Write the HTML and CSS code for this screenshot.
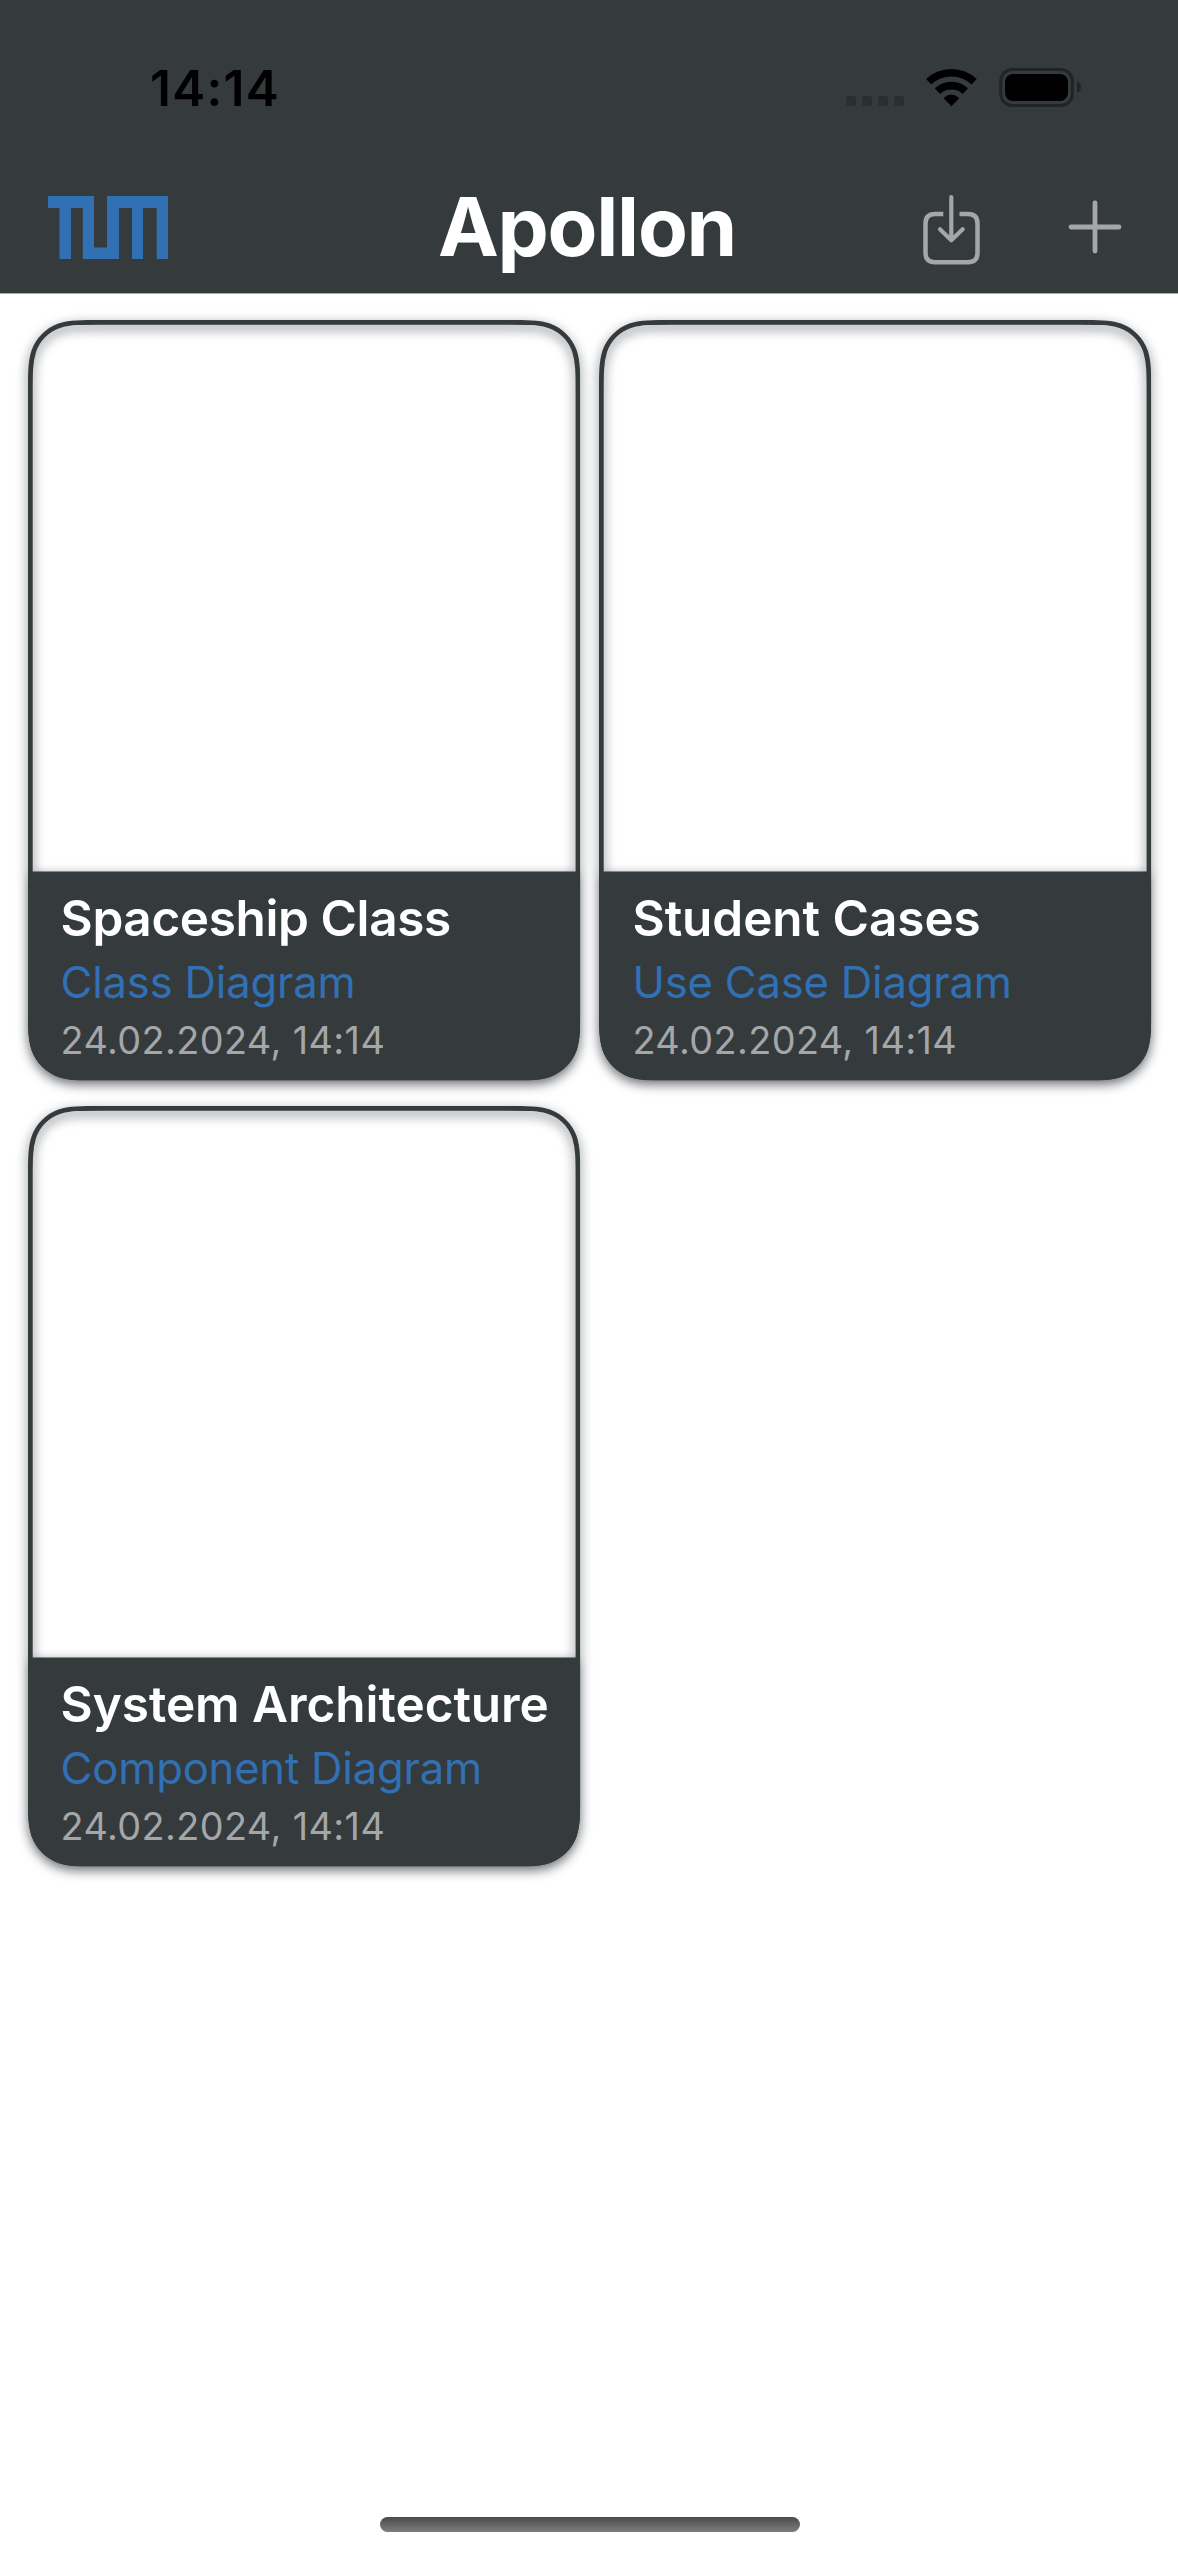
FILE: index.html
```html
<!DOCTYPE html>
<html lang="en">
<head>
<meta charset="utf-8">
<title>Apollon</title>
<link rel="stylesheet" href="styles.css">
</head>
<body>
<svg class="defs" width="0" height="0" aria-hidden="true">
  <defs>
    <path id="card-outline" d="M73.4 0H478.9C500.1 0 510.6 0 520.1 3.1L522 3.6C534.4 8.1 544.2 17.9 548.7 30.3C552.3 41.7 552.3 52.2 552.3 73.4V687.1C552.3 708.3 552.3 718.8 548.7 730.2C544.2 742.6 534.4 752.4 522 756.9L520.1 757.4C510.6 760.5 500.1 760.5 478.9 760.5H73.4C52.2 760.5 41.7 760.5 32.2 757.4L30.3 756.9C17.9 752.4 8.1 742.6 3.6 730.2C0 718.8 0 708.3 0 687.1V73.4C0 52.2 0 41.7 3.6 30.3C8.1 17.9 17.9 8.1 30.3 3.6L32.2 3.1C41.7 0 52.2 0 73.4 0Z"/>
    <clipPath id="card-clip"><use href="#card-outline"/></clipPath>
    <symbol id="card-shape" viewBox="0 0 552.3 760.5">
      <g clip-path="url(#card-clip)" fill="#353a3d">
        <use href="#card-outline" fill="none" stroke="#353a3d" stroke-width="9.4"/>
        <rect y="551.5" width="552.3" height="209"/>
      </g>
    </symbol>
  </defs>
</svg>

<div class="screen">
  <header class="header">
    <div class="status">
      <span class="time">14:14</span>
      <svg class="status-icons" width="236" height="40" viewBox="846 68 236 40">
        <g fill="#2a2d32">
          <rect x="846" y="96" width="10" height="10" rx="3.6"/>
          <rect x="862" y="96" width="10" height="10" rx="3.6"/>
          <rect x="878" y="96" width="10" height="10" rx="3.6"/>
          <rect x="894" y="96" width="10" height="10" rx="3.6"/>
        </g>
        <g fill="none" stroke="#000">
          <path stroke-width="7.6" d="M928.7 81.7A33.2 33.2 0 0 1 974.1 81.7"/>
          <path stroke-width="7.8" d="M937.4 91.1A20.4 20.4 0 0 1 965.4 91.1"/>
        </g>
        <path d="M951.4 106.2L943.9 98.6Q943.6 98 944.2 97.4Q951.4 91.4 958.6 97.4Q959.2 98 958.9 98.6Z"/>
        <rect x="1000.8" y="69.5" width="71.6" height="36" rx="11.5" fill="none" stroke="#212427" stroke-width="3"/>
        <rect x="1005" y="74" width="63" height="27" rx="8"/>
        <path fill="#212427" d="M1077 81Q1081 83.5 1081 87T1077 93Z"/>
      </svg>
    </div>
    <nav class="nav">
      <svg class="logo" width="120" height="63" viewBox="0 0 120 63">
        <path fill="#3070b3" d="M0 0H46V51.5H59V0H120V63H108.7V12H95V63H84V12H71V63H34.8V12H23V63H11.5V12H0Z"/>
      </svg>
      <h1 class="title">Apollon</h1>
      <div class="actions">
        <svg width="58" height="70" viewBox="0 0 58 70" fill="none" stroke="#a5a6a8" stroke-width="4.5">
          <path d="M20.3 19H12Q2.5 19 2.5 28.5V57.8Q2.5 67.2 12 67.2H45Q54.5 67.2 54.5 57.8V28.5Q54.5 19 45 19H36.5"/>
          <path stroke-linecap="round" stroke-linejoin="round" stroke-width="4.2" d="M28.3 2.2V45M17 34.3L28.3 45.3L39.7 34.3"/>
        </svg>
        <svg class="plus" width="54" height="54" viewBox="0 0 54 54" fill="none" stroke="#a5a6a8" stroke-width="4.8" stroke-linecap="round">
          <path d="M27 3V51M3 27H51"/>
        </svg>
      </div>
    </nav>
  </header>

  <main class="grid">
    <article class="card">
      <svg class="shape"><use href="#card-shape"/></svg>
      <div class="info">
        <h2 class="name snug">Spaceship Class</h2>
        <p class="kind">Class Diagram</p>
        <p class="date">24.02.2024, 14:14</p>
      </div>
    </article>
    <article class="card">
      <svg class="shape"><use href="#card-shape"/></svg>
      <div class="info">
        <h2 class="name">Student Cases</h2>
        <p class="kind">Use Case Diagram</p>
        <p class="date">24.02.2024, 14:14</p>
      </div>
    </article>
    <article class="card">
      <svg class="shape"><use href="#card-shape"/></svg>
      <div class="info">
        <h2 class="name">System Architecture</h2>
        <p class="kind">Component Diagram</p>
        <p class="date">24.02.2024, 14:14</p>
      </div>
    </article>
  </main>
  <div class="home-bar"></div>
</div>
</body>
</html>
```
FILE: styles.css
```css
* { box-sizing: border-box; margin: 0; padding: 0; }
body {
  background: #fff;
  font-family: Inter, "Liberation Sans", sans-serif;
}
svg { display: block; flex: none; }
.defs { position: absolute; }
.screen {
  width: 1178px;
  height: 2556px;
  display: flex;
  flex-direction: column;
  align-items: center;
  overflow: hidden;
}
.header {
  width: 100%;
  height: 294px;
  background: #353a3d;
  border-bottom: 1px solid #a9abad;
}
.status {
  height: 138px;
  display: flex;
  justify-content: space-between;
  align-items: flex-start;
  padding: 57px 96px 0 150px;
}
.time {
  font-size: 49.5px;
  font-weight: 600;
  line-height: 62px;
  letter-spacing: 1.3px;
  color: #000;
}
.status-icons { margin-top: 11px; }
.nav {
  display: grid;
  grid-template-columns: 1fr auto 1fr;
  align-items: start;
  padding: 39px 52px 0 48px;
}
.logo { margin-top: 19px; }
.title {
  font-size: 81.5px;
  font-weight: 700;
  line-height: 100px;
  letter-spacing: -1.3px;
  color: #fff;
}
.actions {
  display: flex;
  justify-content: flex-end;
  gap: 87px;
  padding: 18px 4px 0 0;
}
.plus { margin-top: 5px; }
.grid {
  width: 100%;
  display: grid;
  grid-template-columns: 552.3px 552.3px;
  grid-auto-rows: 760.5px;
  gap: 25.5px 19.6px;
  padding: 26.4px 0 0 27.6px;
}
.card { display: grid; }
.shape, .info { grid-area: 1 / 1; }
.shape {
  width: 552.3px;
  height: 760.5px;
  overflow: visible;
  filter: drop-shadow(0 4px 6px rgba(54, 58, 64, 0.75));
}
.info {
  position: relative;
  padding: 566.5px 0 0 33px;
  white-space: nowrap;
}
.name {
  font-size: 49.5px;
  font-weight: 600;
  line-height: 62px;
  letter-spacing: -0.05px;
  color: #fff;
}
.name.snug { letter-spacing: -0.4px; }
.kind {
  font-size: 43.6px;
  line-height: 54px;
  letter-spacing: -0.2px;
  margin-top: 7px;
  color: #3070b3;
}
.date {
  font-size: 37.8px;
  line-height: 46px;
  letter-spacing: 0.4px;
  margin-top: 7px;
  color: #a5a6a8;
}
.home-bar {
  width: 420px;
  height: 15px;
  margin: auto 0 24px 2px;
  border-radius: 8px;
  background: linear-gradient(#4a4a4a, #7e7e7e);
}
```
